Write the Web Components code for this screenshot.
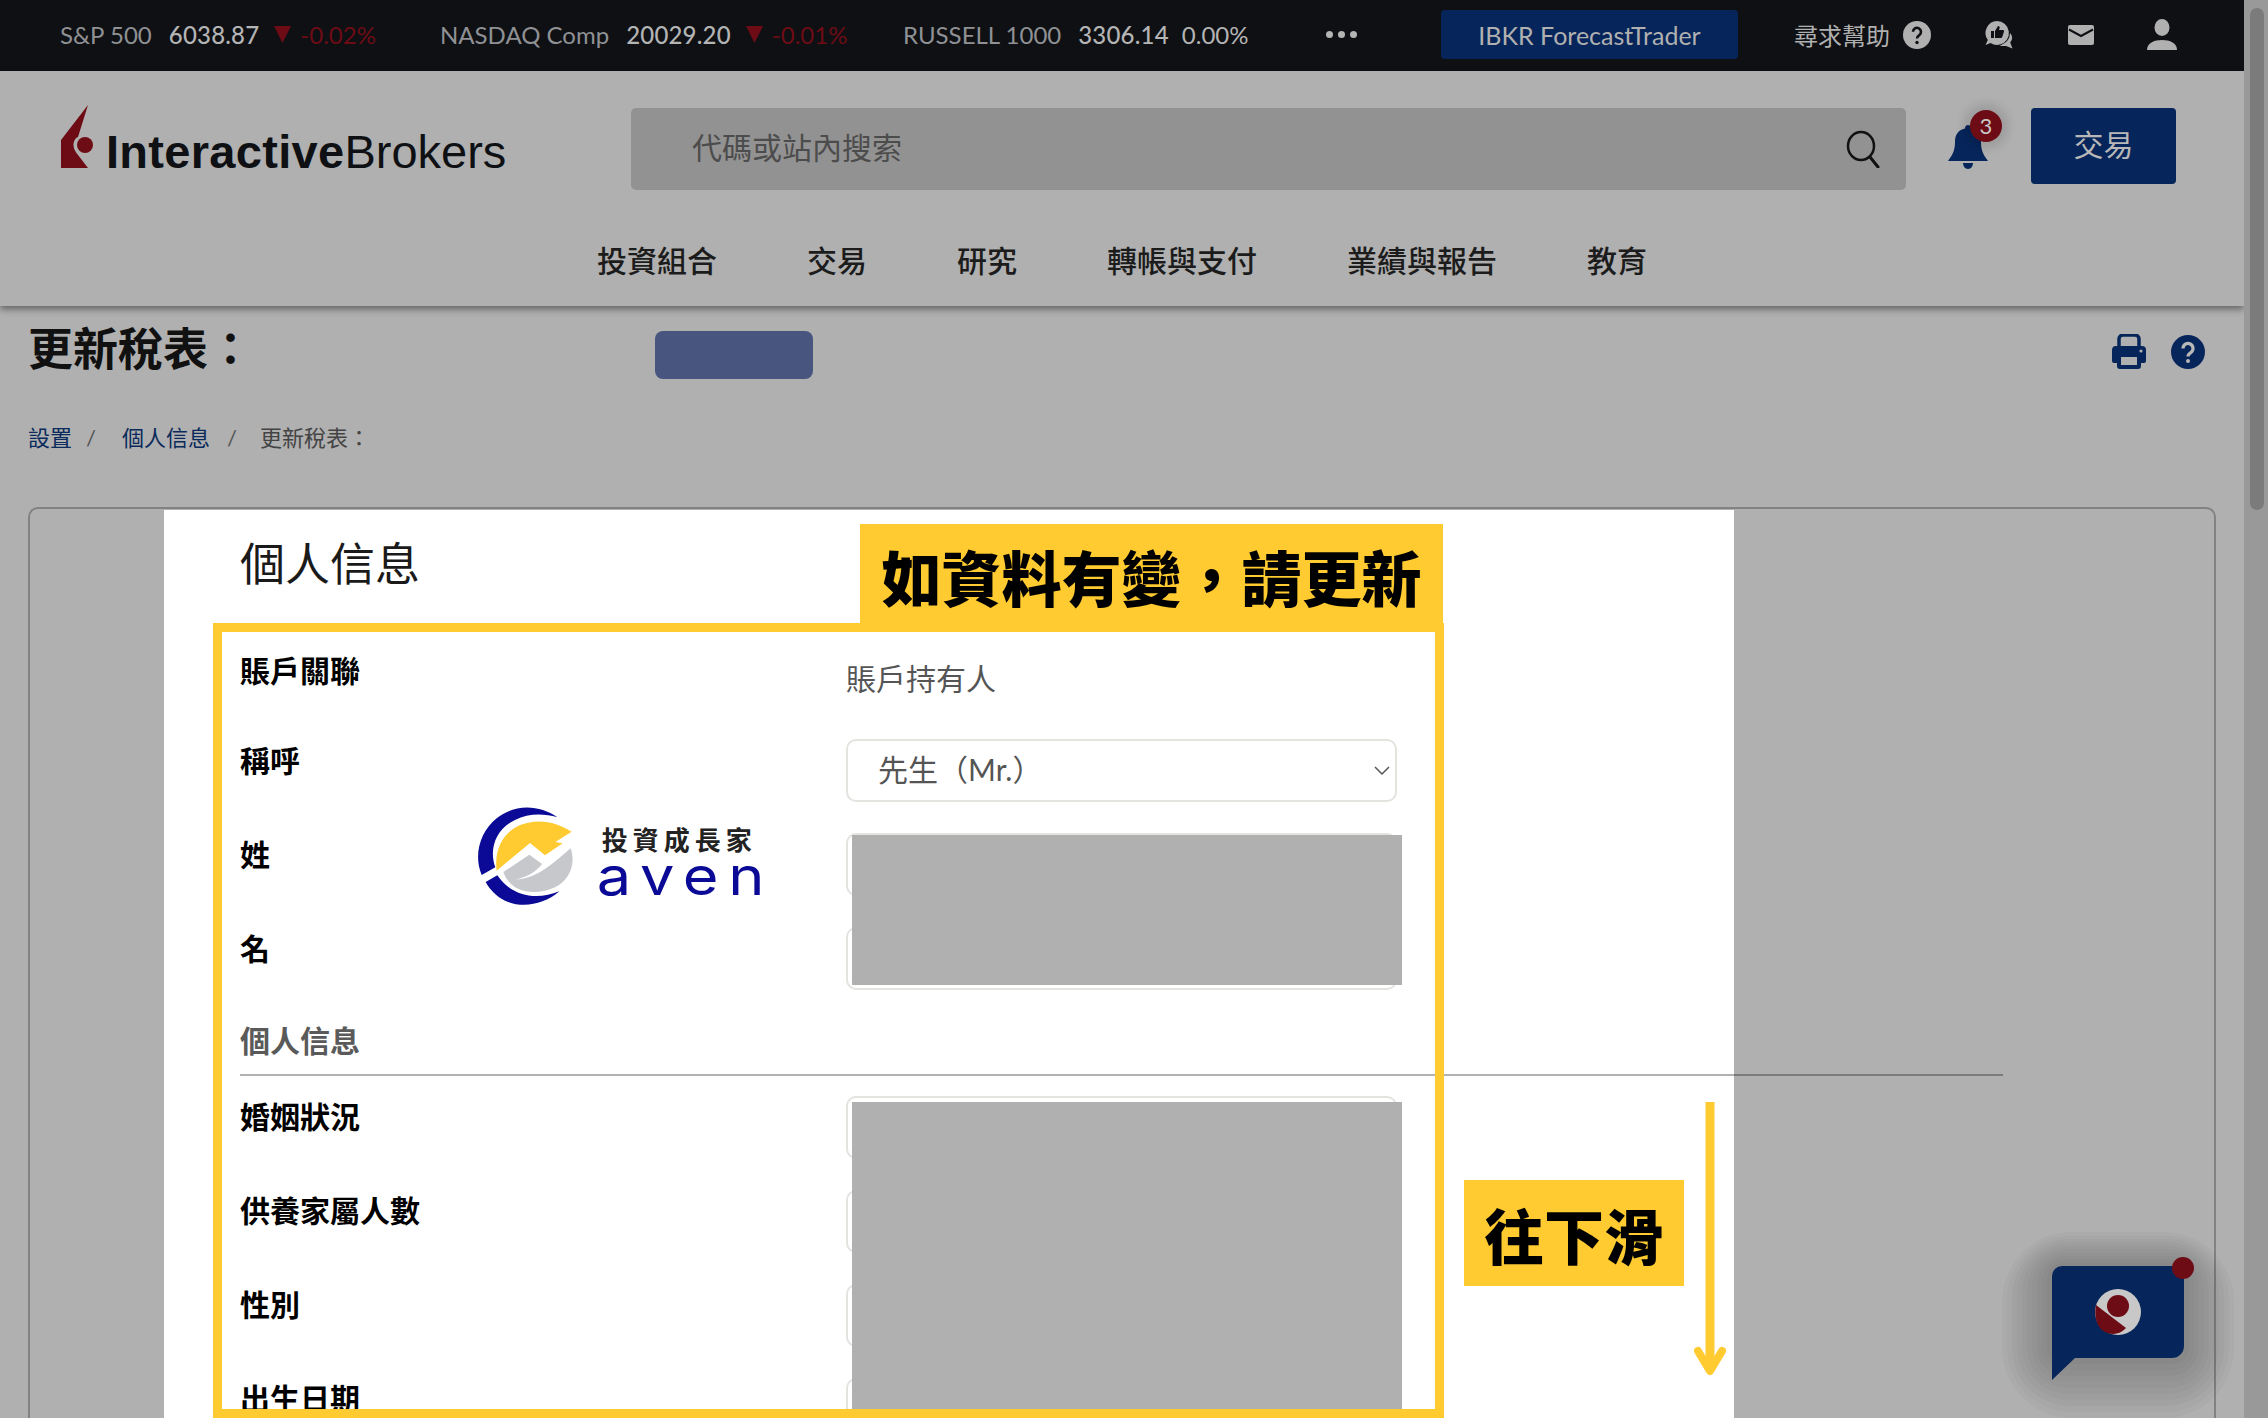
<!DOCTYPE html>
<html lang="zh-Hant">
<head>
<meta charset="utf-8">
<title>更新稅表</title>
<style>
  html, body { margin: 0; height: 1418px; overflow: hidden; background: #b0b0b0; }
  body {
    display: flex;
    font-family: Lato, "Noto Sans CJK TC", sans-serif;
  }
  main { width: 2244px; height: 1418px; overflow: hidden; flex: none; display: flex; flex-direction: column; }
</style>
</head>
<body>
<main>
  <ticker-bar>
    <ticker-item name="S&amp;P 500" value="6038.87" change="-0.02%" down></ticker-item>
    <ticker-item name="NASDAQ Comp" value="20029.20" change="-0.01%" down></ticker-item>
    <ticker-item name="RUSSELL 1000" value="3306.14" change="0.00%"></ticker-item>
  </ticker-bar>
  <brand-header></brand-header>
  <page-head></page-head>
  <tax-panel>
    <form-row label="賬戶關聯" style="--label-top:5px"><span slot="control" class="plain">賬戶持有人</span></form-row>
    <form-row label="稱呼"><text-select slot="control" value="先生（Mr.）"></text-select></form-row>
    <form-row label="姓"><text-select slot="control" blank></text-select></form-row>
    <form-row label="名"><text-select slot="control" blank></text-select></form-row>
    <form-section>個人信息</form-section>
    <form-row label="婚姻狀況" style="--label-top:0px"><text-select slot="control" blank></text-select></form-row>
    <form-row label="供養家屬人數" style="--label-top:0px"><text-select slot="control" blank></text-select></form-row>
    <form-row label="性別" style="--label-top:0px"><text-select slot="control" blank></text-select></form-row>
    <form-row label="出生日期" style="--label-top:0px"><text-select slot="control" blank></text-select></form-row>
  </tax-panel>
</main>
<scroll-rail></scroll-rail>
<chat-fab></chat-fab>

<script>
const CJK = `Lato, "Noto Sans CJK TC", sans-serif`;

class TickerItem extends HTMLElement {
  constructor() {
    super();
    const down = this.hasAttribute('down');
    this.attachShadow({ mode: 'open' }).innerHTML = `
      <style>
        :host { display: flex; align-items: center; font-size: 24px; white-space: nowrap; }
        .name { color: #8f9194; }
        .value { color: #b4b4b4; font-weight: 500; margin-left: 17px; letter-spacing: .2px; }
        svg { margin-left: 15px; }
        .change { color: ${down ? '#6d0c14' : '#b4b4b4'}; margin-left: ${down ? 9 : 13}px; }
      </style>
      <span class="name">${this.getAttribute('name').replace('&', '&amp;')}</span>
      <span class="value">${this.getAttribute('value')}</span>
      ${down ? '<svg width="17" height="17" viewBox="0 0 17 17"><path d="M0 0H17L8.500 17Z" fill="#6d0c14"/></svg>' : ''}
      <span class="change">${this.getAttribute('change')}</span>`;
  }
}
customElements.define('ticker-item', TickerItem);

class TickerBar extends HTMLElement {
  constructor() {
    super();
    this.attachShadow({ mode: 'open' }).innerHTML = `
      <style>
        :host {
          display: flex; align-items: center; height: 71px; flex: none;
          background: #0e1014; padding: 0 0 2px 60px; box-sizing: border-box;
          font-family: ${CJK};
        }
        .tickers { display: grid; grid-template-columns: 380px 463px 423px; }
        .dots { display: flex; gap: 5px; width: 115px; }
        .dots i { width: 7px; height: 7px; border-radius: 50%; background: #b4b4b4; }
        .forecast {
          width: 297px; height: 49px; display: flex; align-items: center; justify-content: center;
          background: #06255a; color: #b0b0b0; border-radius: 4px; font-size: 25px;
        }
        .help { margin-left: 56px; color: #b0b0b0; font-size: 24px; width: 96px; white-space: nowrap; }
        .icons { display: flex; align-items: center; margin-left: 13px; }
        .icons svg { display: block; flex: none; }
      </style>
      <div class="tickers"><slot></slot></div>
      <div class="dots"><i></i><i></i><i></i></div>
      <div class="forecast">IBKR ForecastTrader</div>
      <div class="help">尋求幫助</div>
      <div class="icons">
        <svg width="28" height="28" viewBox="0 0 28 28"><circle cx="14" cy="14" r="14" fill="#b0b0b0"/><path d="M10 10.800a4 4 0 1 1 6.300 3.300c-1.500 1-2.300 1.700-2.300 3.400" fill="none" stroke="#0e1014" stroke-width="2.600"/><circle cx="14" cy="21.500" r="1.700" fill="#0e1014"/></svg>
        <svg style="margin-left:52px" width="32" height="32" viewBox="0 0 32 32"><path d="M14 2a12 12 0 0 1 3 23.600 12 12 0 0 1-9.500-1.500L2.500 26l2.300-5A12 12 0 0 1 14 2Z" fill="#b0b0b0"/><path d="M8 12h3v7H8Zm4 0 3-5c1.500 0 2 1 1.600 2.200L16 11h4c1 0 1.300.8 1 1.600l-1.700 5.200c-.2.800-.8 1.200-1.600 1.200H12Z" fill="#0e1014"/><path d="M27 14a6.500 6.500 0 0 1 .2 9.500l2.300 6-6.500-2.600-6.500.2 3.500-2A13 13 0 0 0 27 14Z" fill="#b0b0b0"/></svg>
        <svg style="margin-left:53px" width="26" height="20" viewBox="0 0 26 20"><rect width="26" height="20" rx="2" fill="#b0b0b0"/><path d="M1 4.500 13 11 25 4.500" fill="none" stroke="#0e1014" stroke-width="2"/></svg>
        <svg style="margin-left:53px" width="30" height="32" viewBox="0 0 30 32"><ellipse cx="15" cy="8.500" rx="7.500" ry="8.500" fill="#b0b0b0"/><path d="M0 31c0-7 7-10 15-10s15 3 15 10Z" fill="#b0b0b0"/></svg>
      </div>`;
  }
}
customElements.define('ticker-bar', TickerBar);

class BrandHeader extends HTMLElement {
  constructor() {
    super();
    this.attachShadow({ mode: 'open' }).innerHTML = `
      <style>
        :host {
          display: block; height: 235px; flex: none; box-sizing: border-box;
          background: #b0b0b0; padding-top: 37px; position: relative; z-index: 1;
          box-shadow: 0 3px 7px rgba(0,0,0,.45);
          font-family: ${CJK};
        }
        .row { display: flex; align-items: flex-start; padding-left: 61px; }
        .logo { display: flex; align-items: flex-end; width: 570px; height: 63px; margin-top: -3px; }
        .logo svg { flex: none; }
        .wordmark {
          font: 400 47px/46px "Liberation Sans", sans-serif; color: #0e1014;
          margin-left: 11px; white-space: nowrap; position: relative; top: 7px;
        }
        .wordmark b { font-weight: 700; letter-spacing: .3px; }
        .search {
          width: 1275px; height: 82px; box-sizing: border-box; background: #929292; border-radius: 5px;
          display: flex; align-items: center; justify-content: space-between;
          padding: 0 25px 0 61px; color: #4c4c4c; font-size: 30px;
        }
        .search span { padding-bottom: 6px; }
        .bell { width: 83px; margin-left: 42px; height: 76px; position: relative; }
        .bell svg { position: absolute; left: 0; top: 17px; }
        .badge {
          position: absolute; left: 22px; top: 2px; width: 32px; height: 32px; border-radius: 50%;
          background: #6d0c14; color: #c8c8c8; font-size: 22px; line-height: 32px; text-align: center;
          box-shadow: 0 0 8px 7px rgba(0,0,0,.1);
        }
        .trade {
          width: 145px; height: 76px; background: #06255a; color: #b8b8b8; border-radius: 4px;
          font-size: 30px; display: flex; align-items: center; justify-content: center;
          padding-bottom: 6px; box-sizing: border-box;
        }
        nav {
          display: flex; gap: 90px; padding-left: 597px; margin-top: 50px;
          font-size: 30px; line-height: 40px; font-weight: 500; color: #1c1c1c;
        }
      </style>
      <div class="row">
        <div class="logo">
          <svg width="34" height="63" viewBox="0 0 34 63"><path d="M27 0 17 32C14 33 12.500 37 12.500 40 12.500 43 14 46 15.500 48L27 63H0V35Z" fill="#6d0c14"/><circle cx="24" cy="40" r="8" fill="#6d0c14"/></svg>
          <span class="wordmark"><b>Interactive</b>Brokers</span>
        </div>
        <div class="search">
          <span>代碼或站內搜索</span>
          <svg width="36" height="38" viewBox="0 0 36 38"><ellipse cx="16" cy="16" rx="13" ry="14" fill="none" stroke="#111" stroke-width="2.500"/><path d="m25 27 8 10" stroke="#111" stroke-width="3" stroke-linecap="round"/></svg>
        </div>
        <div class="bell">
          <svg width="40" height="44" viewBox="0 0 40 44"><path d="M20 0c2 0 3 1.500 3 3.500 7 1.500 10 6.500 10 13 0 8 1.500 12 7 19.500H0c5.500-7.500 7-11.500 7-19.500 0-6.500 3-11.500 10-13C17 1.500 18 0 20 0Z" fill="#06255a"/><path d="M15 38h10c0 3-2 6-5 6s-5-3-5-6Z" fill="#06255a"/></svg>
          <span class="badge">3</span>
        </div>
        <div class="trade">交易</div>
      </div>
      <nav>
        <span>投資組合</span><span>交易</span><span>研究</span><span>轉帳與支付</span><span>業績與報告</span><span>教育</span>
      </nav>`;
  }
}
customElements.define('brand-header', BrandHeader);

class PageHead extends HTMLElement {
  constructor() {
    super();
    this.attachShadow({ mode: 'open' }).innerHTML = `
      <style>
        :host { display: block; flex: none; padding: 14px 39px 0 28px; font-family: ${CJK}; }
        .top { display: flex; align-items: flex-start; height: 60px; }
        h1 { margin: -1px 0 0; width: 225px; font-size: 45px; line-height: 60px; font-weight: 700; color: #111; white-space: nowrap; }
        .pill { width: 158px; height: 48px; margin: 11px 0 0 402px; background: #47557f; border-radius: 8px; }
        .tools { margin: 14px 0 0 auto; display: flex; align-items: center; gap: 25px; }
        .tools svg { display: block; }
        .crumbs { display: flex; margin-top: 43px; font-size: 22px; line-height: 30px; color: #0a2a5c; }
        .sep { color: #555; width: 6px; }
        .current { color: #444; }
      </style>
      <div class="top">
        <h1>更新稅表&#xFF1A;</h1>
        <div class="pill"></div>
        <div class="tools">
          <svg width="34" height="35" viewBox="0 0 34 35"><path d="M7 12V5a4 4 0 0 1 4-4h12a4 4 0 0 1 4 4v7" fill="none" stroke="#06255a" stroke-width="3.500"/><path d="M4 12h26a4 4 0 0 1 4 4v11a2 2 0 0 1-2 2h-3v3a3 3 0 0 1-3 3H8a3 3 0 0 1-3-3v-3H2a2 2 0 0 1-2-2V16a4 4 0 0 1 4-4Z" fill="#06255a"/><rect x="9" y="23" width="16" height="8" fill="#b0b0b0"/><circle cx="29" cy="17" r="1.600" fill="#b0b0b0"/></svg>
          <svg width="34" height="34" viewBox="0 0 34 34"><circle cx="17" cy="17" r="17" fill="#06255a"/><path d="M12 13.500a5 5 0 1 1 7.800 4.100c-1.800 1.200-2.800 2-2.800 4" fill="none" stroke="#b8b8b8" stroke-width="3.200"/><circle cx="17" cy="26" r="2" fill="#b8b8b8"/></svg>
        </div>
      </div>
      <div class="crumbs">
        <span>設置</span><span class="sep" style="margin:0 30px 0 14px">/</span>
        <span>個人信息</span><span class="sep" style="margin:0 27px 0 17px">/</span>
        <span class="current">更新稅表&#xFF1A;</span>
      </div>`;
  }
}
customElements.define('page-head', PageHead);

class TaxPanel extends HTMLElement {
  constructor() {
    super();
    this.attachShadow({ mode: 'open' }).innerHTML = `
      <style>
        :host {
          display: block; flex: none; height: 1100px; margin: 54px 28px 0 28px; box-sizing: border-box;
          border: 2px solid #828282; border-radius: 10px; padding: 1px 0 0 134px; font-family: ${CJK};
        }
        .sheet { position: relative; width: 1570px; height: 1000px; background: #fff; }
        h2 { margin: 0; padding: 24px 0 0 76px; height: 60px; font-size: 45px; line-height: 60px; font-weight: 400; color: #1a1a1a; }
        .rows { padding: 51px 0 0 76px; }
        .mask { position: absolute; left: 688px; width: 550px; background: #b0b0b0; }
        .frame {
          position: absolute; left: 49px; top: 113px; width: 1231px; height: 795px; box-sizing: border-box;
          border: 9px solid #ffcb30;
        }
        .tag {
          position: absolute; background: #ffcb30; color: #000; font-weight: 900;
          display: flex; align-items: center; justify-content: center; white-space: nowrap; font-size: 60px;
        }
        .change { left: 696px; top: 14px; width: 583px; height: 108px; padding-bottom: 6px; box-sizing: border-box; }
        .scroll { left: 1300px; top: 670px; width: 220px; height: 106px; }
        .arrow { position: absolute; left: 1528px; top: 592px; }
        .aven { position: absolute; left: 276px; top: 270px; }
      </style>
      <div class="sheet">
        <h2>個人信息</h2>
        <div class="rows"><slot></slot></div>
        <div class="mask" style="top:325px;height:150px"></div>
        <div class="mask" style="top:592px;height:307px"></div>
        <svg class="aven" width="400" height="150" viewBox="0 0 1200 450">
          <path d="M352 112C300 75 225 70 170 115 120 155 100 225 125 285L166 262C145 205 170 145 225 120 265 100 310 100 352 112Z" fill="#0a0a96"/>
          <path d="M137 306 172 286C215 350 290 362 358 334 310 376 245 385 195 362 170 350 150 330 137 306Z" fill="#0a0a96"/>
          <path d="M170 272C160 200 200 140 265 128 315 118 355 132 395 155L346 186 368 190 315 226 270 189Z" fill="#ffcb30"/>
          <path d="M190 276 268 224 306 252C285 280 255 292 226 299 285 295 320 268 392 205 408 250 390 300 345 322 305 342 255 340 225 322 208 310 196 295 190 276Z" fill="#c6c8cc"/>
          <text x="485" y="210" font-size="78" font-weight="700" letter-spacing="15" fill="#222">投資成長家</text>
          <text transform="translate(470 345) scale(1.15 1)" font-family="Inter, sans-serif" font-size="160" font-weight="400" fill="#0a0a96" textLength="438" lengthAdjust="spacing">aven</text>
        </svg>
        <div class="frame"></div>
        <div class="tag change">如資料有變&#xFF0C;請更新</div>
        <div class="tag scroll">往下滑</div>
        <svg class="arrow" width="36" height="284" viewBox="0 0 36 284">
          <path d="M18 0V266" stroke="#ffcb30" stroke-width="9"/>
          <path d="M6 249 18 269 30 249" fill="none" stroke="#ffcb30" stroke-width="8" stroke-linecap="round" stroke-linejoin="round"/>
        </svg>
      </div>`;
  }
}
customElements.define('tax-panel', TaxPanel);

class FormRow extends HTMLElement {
  constructor() {
    super();
    this.attachShadow({ mode: 'open' }).innerHTML = `
      <style>
        :host { display: grid; grid-template-columns: 606px 551px; height: 94px; font-family: ${CJK}; }
        .label { padding-top: var(--label-top, 1px); font-size: 30px; line-height: 40px; font-weight: 700; color: #000; }
        ::slotted(.plain) { display: block; font-size: 30px; line-height: 66px; color: #555; }
      </style>
      <div class="label">${this.getAttribute('label')}</div>
      <slot name="control"></slot>`;
  }
}
customElements.define('form-row', FormRow);

class FormSection extends HTMLElement {
  constructor() {
    super();
    this.attachShadow({ mode: 'open' }).innerHTML = `
      <style>
        :host {
          display: block; width: 1763px; height: 55px; box-sizing: border-box; margin-bottom: 20px;
          border-bottom: 2px solid rgba(0,0,0,.3);
          font: 600 30px/39px ${CJK}; color: #5a5a5a;
        }
      </style>
      <slot></slot>`;
  }
}
customElements.define('form-section', FormSection);

class TextSelect extends HTMLElement {
  constructor() {
    super();
    const value = this.getAttribute('value') || '';
    this.attachShadow({ mode: 'open' }).innerHTML = `
      <style>
        :host {
          display: flex; align-items: center; justify-content: space-between;
          height: 63px; box-sizing: border-box; padding: 0 5px 0 30px;
          border: 2px solid #e4e3df; border-radius: 10px; background: #fff;
          font: 30px ${CJK}; color: #555;
        }
        span { padding-bottom: 6px; }
      </style>
      <span>${value}</span>
      ${this.hasAttribute('blank') ? '' : '<svg width="16" height="10" viewBox="0 0 16 10"><path d="M1 1l7 7 7-7" fill="none" stroke="#555" stroke-width="1.500"/></svg>'}`;
  }
}
customElements.define('text-select', TextSelect);

class ScrollRail extends HTMLElement {
  constructor() {
    super();
    this.attachShadow({ mode: 'open' }).innerHTML = `
      <style>
        :host { display: block; width: 24px; height: 1418px; flex: none; background: #999; box-sizing: border-box; padding: 8px 4px 0 6px; }
        div { height: 502px; border-radius: 7px; background: #7b7b7b; }
      </style>
      <div></div>`;
  }
}
customElements.define('scroll-rail', ScrollRail);

class ChatFab extends HTMLElement {
  constructor() {
    super();
    // the halo is a stack of faint rounded rects, it bands the same way the reference does
    let halo = '';
    for (let i = 0; i < 10; i++) {
      const x = -50 + i * 5, y = -34 + i * 3.4;
      const w = 232 - i * 10, h = 186 - i * 9.4;
      halo += `<rect x="${x}" y="${y}" width="${w}" height="${h}" rx="${70 - i * 6}" fill="#000" fill-opacity=".028"/>`;
    }
    this.attachShadow({ mode: 'open' }).innerHTML = `
      <style>
        :host {
          position: fixed; right: 84px; bottom: 60px; width: 132px; height: 92px; display: block;
          z-index: 5;
        }
        svg { position: absolute; left: 0; top: 0; overflow: visible; }
      </style>
      <svg width="132" height="92" viewBox="0 0 132 92">
        ${halo}
        <path d="M10 0H122A10 10 0 0 1 132 10V80A12 12 0 0 1 120 92H23L0 114V10A10 10 0 0 1 10 0Z" fill="#06255a"/>
        <circle cx="66" cy="46" r="23" fill="#c8c8c8"/>
        <path d="M44 39 74 62C68 69 58 70 50 64 44 59 42 48 44 39Z" fill="#6d0c14"/>
        <circle cx="66" cy="40" r="11" fill="#6d0c14"/>
        <circle cx="131" cy="2" r="11" fill="#6d0c14"/>
      </svg>`;
  }
}
customElements.define('chat-fab', ChatFab);
</script>
</body>
</html>
